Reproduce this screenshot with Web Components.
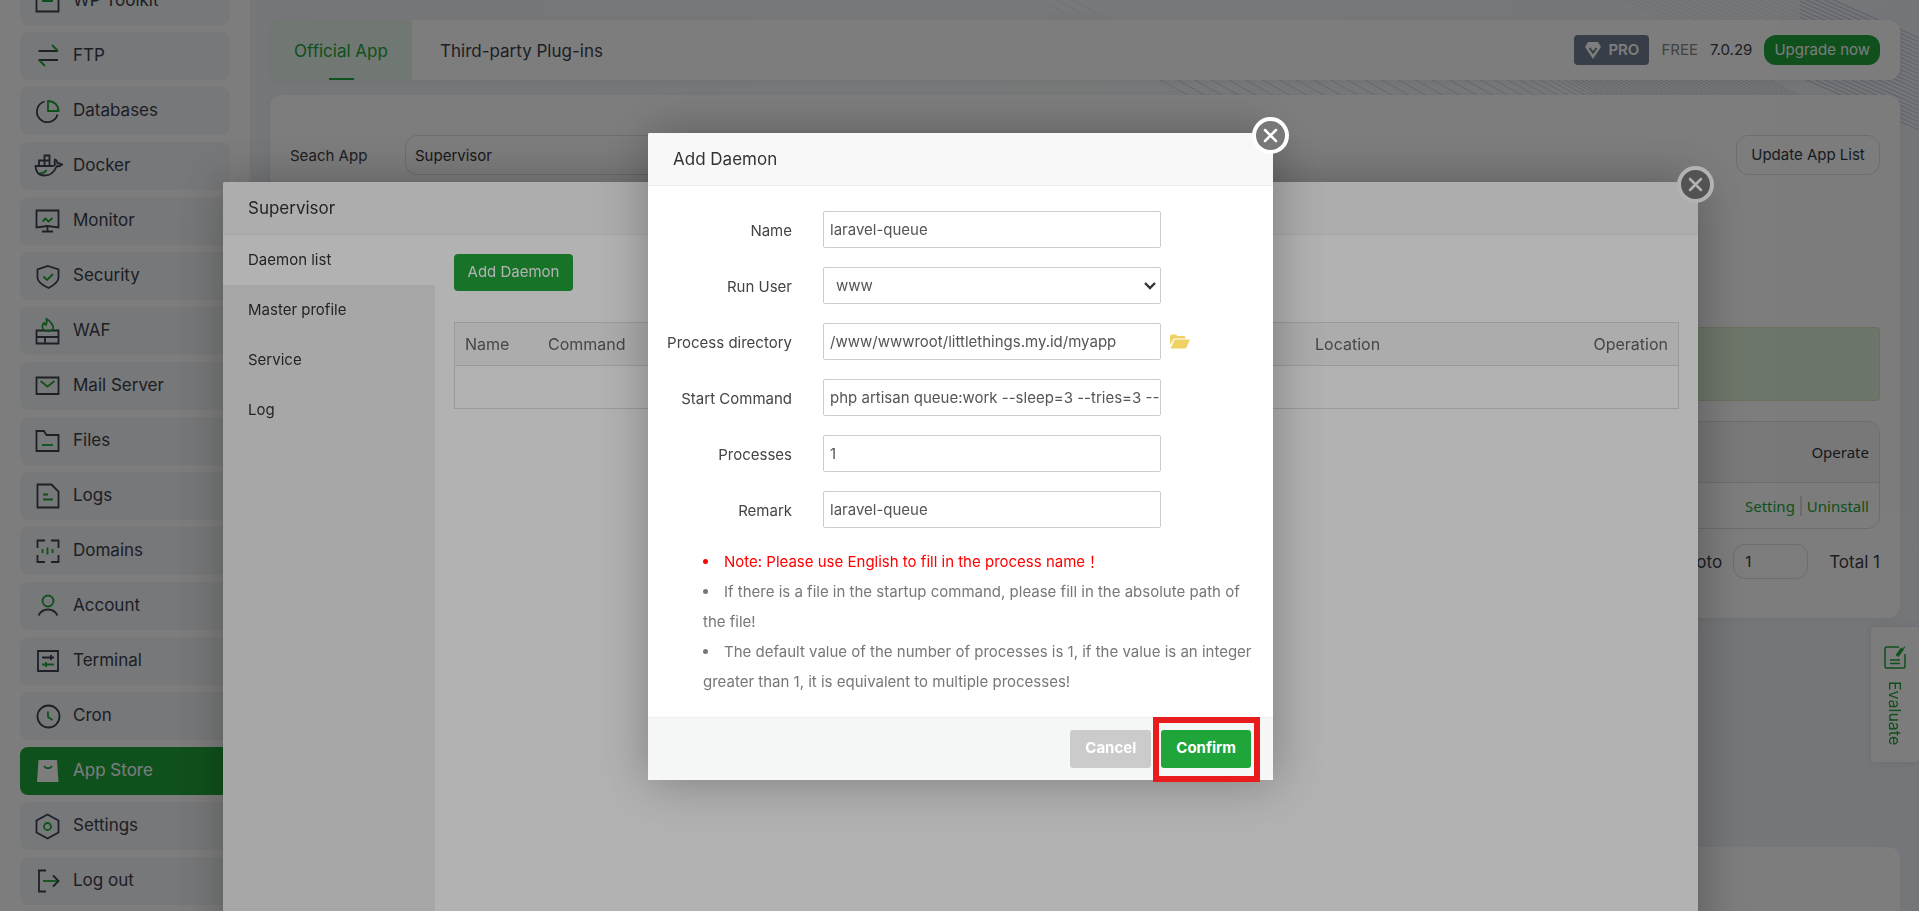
<!DOCTYPE html>
<html lang="en">
<head>
<meta charset="utf-8">
<title>App Store</title>
<style>
    html, body { height: 100%; }
    body {
        margin: 0;
        overflow: hidden;
        font-family: Inter, "Noto Sans CJK TC", sans-serif;
        font-size: 15px;
        line-height: 20px;
        color: #3c4048;
        background: #f0f3f7;
        --green: #20a53a;
        --ink: #3e4252;
        --line: #dcdfe6;
    }
    .shell { display: flex; height: 100%; overflow: hidden; }
    main {
        position: relative;
        flex: 1;
        min-width: 0;
        padding: 20px 19px 0 20px;
    }
</style>
</head>
<body>

<div class="shell">
    <side-nav>
        <nav-item icon="toolkit">WP Toolkit</nav-item>
        <nav-item icon="ftp">FTP</nav-item>
        <nav-item icon="databases">Databases</nav-item>
        <nav-item icon="docker">Docker</nav-item>
        <nav-item icon="monitor">Monitor</nav-item>
        <nav-item icon="security">Security</nav-item>
        <nav-item icon="waf">WAF</nav-item>
        <nav-item icon="mail">Mail Server</nav-item>
        <nav-item icon="files">Files</nav-item>
        <nav-item icon="logs">Logs</nav-item>
        <nav-item icon="domains">Domains</nav-item>
        <nav-item icon="account">Account</nav-item>
        <nav-item icon="terminal">Terminal</nav-item>
        <nav-item icon="cron">Cron</nav-item>
        <nav-item icon="store" active>App Store</nav-item>
        <nav-item icon="settings">Settings</nav-item>
        <nav-item icon="logout">Log out</nav-item>
    </side-nav>
    <main>
        <line-art></line-art>
        <top-bar></top-bar>
        <app-panel></app-panel>
        <foot-panel></foot-panel>
    </main>
</div>
<evaluate-tab></evaluate-tab>

<layer-dialog class="plugin" heading="Supervisor">
    <supervisor-view></supervisor-view>
</layer-dialog>

<layer-dialog class="form" heading="Add Daemon">
    <daemon-form>
        <field-row label="Name" value="laravel-queue"></field-row>
        <field-row label="Run User" value="www" type="select"></field-row>
        <field-row label="Process directory" value="/www/wwwroot/littlethings.my.id/myapp" folder></field-row>
        <field-row label="Start Command" value="php artisan queue:work --sleep=3 --tries=3 --"></field-row>
        <field-row label="Processes" value="1"></field-row>
        <field-row label="Remark" value="laravel-queue"></field-row>
    </daemon-form>
</layer-dialog>

<script>
    // g = green strokes, everything else takes the ink colour
    const icons = {
        toolkit: '<path d="M.5 0h22v22.5H.5z"/><path class="g" d="M6 11.5h11" stroke-width="3"/>',
        ftp: '<path d="M2.5 7H22M2.5 16H22"/><path class="g" d="M16 1l6 6M3 16l6 6"/>',
        databases: '<path d="M8.5 2.5A10.5 10.5 0 1 0 21.5 15.5"/><path class="g" d="M12 2v10h10.500C22.500 6 18 2 12 2z"/>',
        docker: '<path d="M-.5 12H17C19 11.500 19.500 10 18.500 8.500L19 5.500C21 6.500 21.500 8 21.500 9.500C23 9 24.500 9.500 26 10.500C24 12.500 22 12.500 20.500 12.500C18 19 13 21.500 8.500 21.500C2 21.500-.5 17-.5 12z"/><path d="M3 12V6.500h10.500V12M8.500 12V1.500h5V12"/><path class="g" d="M3.500 19c4 .5 6-1 7-3"/>',
        monitor: '<path d="M.5 1.500h22v17L11.500 17 .5 18.500zM11.500 17v5.500M6 22.500h11"/><path class="g" d="M6.500 12.500l3-3 3 3 4-3.500"/>',
        security: '<path d="M12 2l10.500 3.500v8c0 5-5 8-10 10.500C7 21.500 1.500 18.500 1.500 13.500v-8z"/><path class="g" d="M7.500 12.500l3.500 3.500 6-6"/>',
        waf: '<path d="M.5 11.500h22v13H.5zM.5 18h22M9 18v6.500"/><path class="g" d="M8.500 11.500C5 9 6.500 5 8 4l2 2c1-2 1-4 .5-6 3.500 1.500 7.500 7 6.500 9.500-.5 1.500-1.500 2-2.500 2.500H9"/>',
        mail: '<path d="M.5 3.500h22V20H.5z"/><path class="g" d="M4.500 7l7 5.500 7-5.500"/>',
        files: '<path d="M.5 2h7.500l2.500 4h12v16H.5z"/><path class="g" d="M6 16h11"/>',
        logs: '<path d="M1.500.5h14l7 7v16h-21z"/><path class="g" d="M7 10.500h5M7 15.500h10"/>',
        domains: '<path d="M1.500 9V1.500H9M15 1.500h7.500V9M22.500 16v7H15M9 23H1.500v-7"/><path class="g" d="M6.500 10v4M11.500 8.500v7M16.500 10v4"/>',
        account: '<circle class="g" cx="12" cy="7" r="5.500"/><path d="M2.500 21.500c4-8 15-8 19 0"/>',
        terminal: '<path d="M2 2h20v20H2zM6 8.500h12M15 6v5"/><path class="g" d="M6 15.500h12M10 13v5"/>',
        cron: '<circle cx="12.500" cy="12.500" r="11"/><path class="g" d="M12 7.500v5.500l4.500 3"/>',
        store: '<path d="M2.500 1h18.500l1.500 22H1z" fill="#fff" stroke="none"/><path class="g" d="M8 7c2 3 6 3 8 0"/>',
        settings: '<path d="M11.500.5l11 6v12l-11 6-11-6v-12z"/><circle class="g" cx="11.500" cy="12.500" r="3.500"/>',
        logout: '<path d="M10 1.500H3v21h7M17 6.500l5.500 5.500-5.500 5.500"/><path class="g" d="M7 12h14"/>'
    };

    class SideNav extends HTMLElement {
        constructor() {
            super();
            this.attachShadow({ mode: 'open' }).innerHTML = `
                <style>
                    :host {
                        display: block;
                        flex: none;
                        width: 250px;
                        box-sizing: border-box;
                        background: #fff;
                        overflow: hidden;
                    }
                    /* list is scrolled a little, first row is cut off */
                    nav {
                        display: flex;
                        flex-direction: column;
                        gap: 7px;
                        margin-top: -23px;
                        padding: 0 20px;
                    }
                </style>
                <nav><slot></slot></nav>
            `;
        }
    }
    customElements.define('side-nav', SideNav);

    class NavItem extends HTMLElement {
        connectedCallback() {
            this.attachShadow({ mode: 'open' }).innerHTML = `
                <style>
                    :host { display: block; }
                    a {
                        display: flex;
                        align-items: center;
                        gap: 13px;
                        height: 48px;
                        padding: 0 16px;
                        border-radius: 8px;
                        background: #f3f5f7;
                        color: #3c404d;
                        font-size: 17px;
                        line-height: 20px;
                        text-decoration: none;
                    }
                    span { padding-bottom: 3px; }
                    svg {
                        flex: none;
                        width: 24px;
                        height: 24px;
                        overflow: visible;
                        fill: none;
                        stroke: var(--ink);
                        stroke-width: 1.8;
                    }
                    .g { stroke: var(--green); }
                    :host([active]) a { background: var(--green); color: #fff; }
                </style>
                <a href="#"><svg viewBox="0 0 24 24">${icons[this.getAttribute('icon')]}</svg><span><slot></slot></span></a>
            `;
        }
    }
    customElements.define('nav-item', NavItem);

    class LineArt extends HTMLElement {
        connectedCallback() {
            let d = '';
            // wide strokes that close up toward the right
            let x = 107;
            let step = 17;
            while (x < 720) {
                d += `M${x} 78l36 20`;
                x += step;
                if (x > 380) step = Math.max(5, step - 1);
            }
            let fan = '';
            for (let y = 35; y < 128; y += 4) {
                fan += `M750 ${y - 50}l119 53`;
            }
            let top = '';
            for (let i = 0; i < 6; i++) top += `M${-60 + i * 16} -2l42 24`;
            for (let i = 0; i < 24; i++) top += `M${570 + i * 9} -2l54 24`;
            this.attachShadow({ mode: 'open' }).innerHTML = `
                <style>
                    :host {
                        position: absolute;
                        inset: 0;
                        overflow: hidden;
                        z-index: -1;
                        background: linear-gradient(100deg, #eff2f7, #f2f5f6 45%, #f1f3f6 70%, #eff1f6);
                    }
                    svg { position: absolute; top: 0; right: 0; fill: none; }
                </style>
                <svg width="869" height="140" viewBox="0 0 869 140">
                    <path d="${top}" stroke="#e4e6ea"/>
                    <path d="${d}" stroke="#d2d6dc"/>
                    <path d="${fan}" stroke="#c3c5dc"/>
                </svg>
            `;
        }
    }
    customElements.define('line-art', LineArt);

    class TopBar extends HTMLElement {
        constructor() {
            super();
            this.attachShadow({ mode: 'open' }).innerHTML = `
                <style>
                    :host {
                        display: flex;
                        justify-content: space-between;
                        align-items: center;
                        height: 60px;
                        padding-right: 20px;
                        background: #fff;
                        border-radius: 12px;
                        box-shadow: 0 2px 10px rgba(0, 0, 0, .05);
                    }
                    .tabs { display: flex; height: 100%; }
                    .tabs a {
                        display: flex;
                        flex-direction: column;
                        align-items: center;
                        justify-content: center;
                        box-sizing: border-box;
                        padding: 2px 28px 0;
                        font-size: 17px;
                        color: #3c404d;
                        text-decoration: none;
                    }
                    .tabs .on {
                        width: 142px;
                        padding: 2px 0 0;
                        color: var(--green);
                        background: linear-gradient(var(--green), var(--green)) bottom / 25px 2px no-repeat, #e6f2ea;
                    }
                    .info { display: flex; align-items: center; }
                    .pro {
                        display: flex;
                        align-items: center;
                        gap: 6px;
                        height: 30px;
                        padding: 0 10px;
                        margin-right: 12px;
                        border-radius: 4px;
                        background: #737e91;
                        color: #fff;
                        font-weight: 600;
                    }
                    .free { color: #888; margin-right: 12px; }
                    button {
                        height: 30px;
                        margin-left: 12px;
                        padding: 0 10px;
                        border: 0;
                        border-radius: 12px;
                        background: var(--green);
                        color: #fff;
                        font: inherit;
                    }
                </style>
                <div class="tabs"><a class="on" href="#">Official App</a><a href="#">Third-party Plug-ins</a></div>
                <div class="info">
                    <span class="pro"><svg width="18" height="18" viewBox="0 0 18 18"><path d="M4 1h10l3 5-8 12L1 6z" fill="#fff"/><path d="M5.500 7L9 11.500 12.500 7" fill="none" stroke="#737e91" stroke-width="2"/></svg>PRO</span>
                    <span class="free">FREE</span>
                    <span>7.0.29</span>
                    <button type="button">Upgrade now</button>
                </div>
            `;
        }
    }
    customElements.define('top-bar', TopBar);

    class AppPanel extends HTMLElement {
        constructor() {
            super();
            this.attachShadow({ mode: 'open' }).innerHTML = `
                <style>
                    :host {
                        display: block;
                        margin-top: 15px;
                        padding: 40px 20px 39px;
                        background: #fff;
                        border-radius: 12px;
                        box-shadow: 0 2px 10px rgba(0, 0, 0, .05);
                    }
                    .search { display: flex; align-items: center; }
                    .search label { width: 115px; padding-top: 2px; }
                    input {
                        box-sizing: border-box;
                        border: 1px solid var(--line);
                        border-radius: 12px;
                        background: none;
                        font: inherit;
                        color: #333;
                        outline: 0;
                    }
                    .search input { width: 375px; height: 40px; padding: 0 9px; }
                    .search button {
                        margin-left: auto;
                        width: 144px;
                        height: 40px;
                        padding: 0;
                        border: 1px solid var(--line);
                        border-radius: 12px;
                        background: none;
                        color: #333844;
                        font: inherit;
                    }
                    .notice {
                        height: 72px;
                        margin: 152px 0 20px;
                        border: 1px solid #d2e6c4;
                        border-radius: 4px;
                        background: #dff0d8;
                    }
                    .list {
                        border: 1px solid var(--line);
                        border-radius: 12px;
                        overflow: hidden;
                    }
                    table {
                        width: 100%;
                        border-collapse: collapse;
                        font-family: "Noto Sans", sans-serif;
                        text-align: right;
                    }
                    th {
                        height: 60px;
                        padding: 0 10px;
                        background: #f6f6f7;
                        border-bottom: 1px solid var(--line);
                        font-weight: 400;
                        text-align: right;
                        color: #2f333d;
                    }
                    td { height: 45px; padding: 0 10px; }
                    td div { display: flex; justify-content: flex-end; gap: 5px; }
                    td a { color: var(--green); text-decoration: none; }
                    td i { width: 2px; background: #d8dade; }
                    .pages {
                        display: flex;
                        justify-content: flex-end;
                        align-items: center;
                        margin-top: 15px;
                        font-size: 17px;
                    }
                    .pages input { width: 75px; height: 35px; margin: 0 21px 0 11px; padding: 0 11px; font-size: 15px; }
                </style>
                <div class="search">
                    <label for="q">Seach App</label>
                    <input id="q" type="text" value="Supervisor">
                    <button type="button">Update App List</button>
                </div>
                <div class="notice"></div>
                <div class="list">
                    <table>
                        <thead><tr><th>Operate</th></tr></thead>
                        <tbody><tr><td><div><a href="#">Setting</a><i></i><a href="#">Uninstall</a></div></td></tr></tbody>
                    </table>
                </div>
                <div class="pages">
                    <label for="page">Goto</label>
                    <input id="page" type="text" value="1">
                    <span>Total 1</span>
                </div>
            `;
        }
    }
    customElements.define('app-panel', AppPanel);

    class FootPanel extends HTMLElement {
        constructor() {
            super();
            this.attachShadow({ mode: 'open' }).innerHTML = `
                <style>
                    :host {
                        display: block;
                        height: 120px;
                        margin-top: 229px;
                        background: #fff;
                        border-radius: 12px;
                    }
                </style>
            `;
        }
    }
    customElements.define('foot-panel', FootPanel);

    class EvaluateTab extends HTMLElement {
        constructor() {
            super();
            this.attachShadow({ mode: 'open' }).innerHTML = `
                <style>
                    :host { position: fixed; right: 0; top: 627px; }
                    a {
                        display: flex;
                        flex-direction: column;
                        align-items: center;
                        gap: 12px;
                        box-sizing: border-box;
                        width: 48px;
                        height: 135px;
                        padding-top: 19px;
                        border-radius: 4px;
                        background: #fff;
                        box-shadow: 0 0 8px rgba(0, 0, 0, .1);
                        color: var(--green);
                        font-size: 16px;
                        text-decoration: none;
                    }
                    span { writing-mode: vertical-rl; }
                </style>
                <a href="#">
                    <svg width="22" height="23" viewBox="0 0 22 23" fill="none" stroke="#20a53a" stroke-width="1.500"><path d="M15 1H2.500Q1 1 1 2.500v18Q1 22 2.500 22h17q1.500 0 1.500-1.500V8M6 14h10M6 17.500h10"/><path d="M13 10l5.500-7.500" stroke-width="3.500"/><path d="M19.500 1.500l1 .5" stroke-width="3"/></svg>
                    <span>Evaluate</span>
                </a>
            `;
        }
    }
    customElements.define('evaluate-tab', EvaluateTab);

    class LayerDialog extends HTMLElement {
        connectedCallback() {
            this.attachShadow({ mode: 'open' }).innerHTML = `
                <style>
                    :host {
                        position: fixed;
                        inset: 0;
                        display: flex;
                        justify-content: center;
                        align-items: flex-start;
                        overflow: hidden;
                        background: rgba(0, 0, 0, .3);
                    }
                    section {
                        position: relative;
                        box-sizing: border-box;
                        max-width: 96vw;
                        border-radius: 2px;
                        background: #fff;
                        box-shadow: 1px 1px 50px rgba(0, 0, 0, .3);
                    }
                    :host(.plugin) { padding: 182px 0 0 2px; }
                    :host(.plugin) section { width: 1475px; }
                    :host(.form) { padding: 133px 0 0 2px; }
                    :host(.form) section { width: 625px; }
                    h2 {
                        margin: 0;
                        padding: 0 25px;
                        border-bottom: 1px solid #eee;
                        border-radius: 2px 2px 0 0;
                        background: #f8f8f8;
                        color: #333;
                        font-size: 17px;
                        font-weight: 400;
                        line-height: 52px;
                    }
                    button {
                        position: absolute;
                        top: -16px;
                        right: -16px;
                        width: 37px;
                        height: 37px;
                        padding: 0;
                        border: 4px solid #fff;
                        border-radius: 50%;
                        background: #787878;
                    }
                    svg { display: block; margin: auto; }
                </style>
                <section>
                    <h2>${this.getAttribute('heading')}</h2>
                    <slot></slot>
                    <button type="button" aria-label="Close"><svg width="15" height="15" viewBox="0 0 15 15"><path d="M2 2l11 11M13 2L2 13" stroke="#fff" stroke-width="2.500" stroke-linecap="round"/></svg></button>
                </section>
            `;
        }
    }
    customElements.define('layer-dialog', LayerDialog);

    class SupervisorView extends HTMLElement {
        constructor() {
            super();
            this.attachShadow({ mode: 'open' }).innerHTML = `
                <style>
                    :host { display: flex; min-height: 760px; }
                    nav { width: 212px; background: #f0f0f0; }
                    nav a {
                        display: block;
                        padding: 0 25px;
                        color: #333;
                        line-height: 50px;
                        text-decoration: none;
                    }
                    nav .on { background: #fff; }
                    .body { flex: 1; padding: 19px 19px 0; }
                    button {
                        width: 119px;
                        height: 37px;
                        padding: 0 0 2px;
                        border: 0;
                        border-radius: 4px;
                        background: var(--green);
                        color: #fff;
                        font: inherit;
                    }
                    table {
                        width: 100%;
                        margin-top: 31px;
                        border: 1px solid #ddd;
                        border-collapse: collapse;
                        table-layout: fixed;
                    }
                    th {
                        height: 42px;
                        padding: 0 10px;
                        border-bottom: 1px solid #ddd;
                        background: #f6f6f6;
                        color: #666;
                        font-size: 16px;
                        font-weight: 400;
                        text-align: left;
                    }
                    td { height: 42px; padding: 0; }
                    .name { width: 63px; }
                    .loc { width: 220px; }
                    .op { width: 113px; text-align: right; }
                </style>
                <nav><a class="on" href="#">Daemon list</a><a href="#">Master profile</a><a href="#">Service</a><a href="#">Log</a></nav>
                <div class="body">
                    <button type="button">Add Daemon</button>
                    <table>
                        <thead><tr><th class="name">Name</th><th>Command</th><th class="loc">Location</th><th class="op">Operation</th></tr></thead>
                        <tbody><tr><td colspan="4"></td></tr></tbody>
                    </table>
                </div>
            `;
        }
    }
    customElements.define('supervisor-view', SupervisorView);

    class FieldRow extends HTMLElement {
        connectedCallback() {
            const label = this.getAttribute('label');
            const value = this.getAttribute('value');
            let control = `<input id="f" type="text" value="${value}">`;
            if (this.getAttribute('type') === 'select') {
                control = `<span class="pick"><select id="f"><option>${value}</option></select><svg width="12" height="8" viewBox="0 0 12 8"><path d="M1 1l5 5 5-5" fill="none" stroke="#333" stroke-width="2.400"/></svg></span>`;
            }
            let folder = '';
            if (this.hasAttribute('folder')) {
                folder = '<svg width="20" height="15" viewBox="0 0 20 15" fill="#f0d264"><path d="M0 11V2Q0 .5 1.500.5h4Q7 .5 7 2h7q1.500 0 1.500 1.500V4.500H5Q3.800 4.500 3.300 5.500z"/><path d="M.5 14.500L4.200 6.500Q4.600 5.600 5.600 5.600H20L16.500 13.500Q16 14.500 15 14.500z"/></svg>';
            }
            this.attachShadow({ mode: 'open' }).innerHTML = `
                <style>
                    :host { display: flex; align-items: center; }
                    label {
                        width: 144px;
                        margin-right: 31px;
                        padding-top: 2px;
                        text-align: right;
                        color: #444;
                    }
                    input, select {
                        box-sizing: border-box;
                        width: 338px;
                        height: 37px;
                        padding: 0 1px 0 6px;
                        border: 1px solid #ccc;
                        border-radius: 2px;
                        background: #fff;
                        color: #555;
                        font: inherit;
                        outline: 0;
                    }
                    select { display: block; padding: 0 12px; appearance: none; }
                    .pick { display: grid; align-items: center; }
                    .pick > * { grid-area: 1 / 1; }
                    .pick svg { justify-self: end; margin-right: 5px; pointer-events: none; }
                    input + svg { margin-left: 9px; }
                </style>
                <label for="f">${label}</label>${control}${folder}
            `;
        }
    }
    customElements.define('field-row', FieldRow);

    class DaemonForm extends HTMLElement {
        constructor() {
            super();
            this.attachShadow({ mode: 'open' }).innerHTML = `
                <style>
                    :host { display: block; }
                    form {
                        display: flex;
                        flex-direction: column;
                        gap: 19px;
                        padding: 25px 0 20px;
                    }
                    ul {
                        margin: 0;
                        padding: 0 20px 0 55px;
                        list-style-position: inside;
                        color: #777;
                        line-height: 30px;
                    }
                    .warn { color: red; }
                    footer {
                        display: flex;
                        justify-content: flex-end;
                        gap: 10px;
                        padding: 12px 22px;
                        border-top: 1px solid #edf1f2;
                        background: #f6f8f8;
                    }
                    button {
                        height: 38px;
                        padding: 0 15px 2px;
                        border: 0;
                        border-radius: 3px;
                        background: #cbcbcb;
                        color: #fff;
                        font: inherit;
                        font-weight: 700;
                    }
                    .ok { position: relative; }
                    .ok button { background: var(--green); }
                    /* red marker around the confirm button */
                    .ok::after {
                        content: "";
                        position: absolute;
                        inset: -13px -9px -14px -8px;
                        border: 6px solid #e81c1c;
                        pointer-events: none;
                    }
                </style>
                <form>
                    <slot></slot>
                    <ul>
                        <li class="warn" lang="zh-TW">Note: Please use English to fill in the process name！</li>
                        <li>If there is a file in the startup command, please fill in the absolute path of the file!</li>
                        <li>The default value of the number of processes is 1, if the value is an integer greater than 1, it is equivalent to multiple processes!</li>
                    </ul>
                </form>
                <footer>
                    <button type="button">Cancel</button>
                    <span class="ok"><button type="button">Confirm</button></span>
                </footer>
            `;
        }
    }
    customElements.define('daemon-form', DaemonForm);
</script>
</body>
</html>
